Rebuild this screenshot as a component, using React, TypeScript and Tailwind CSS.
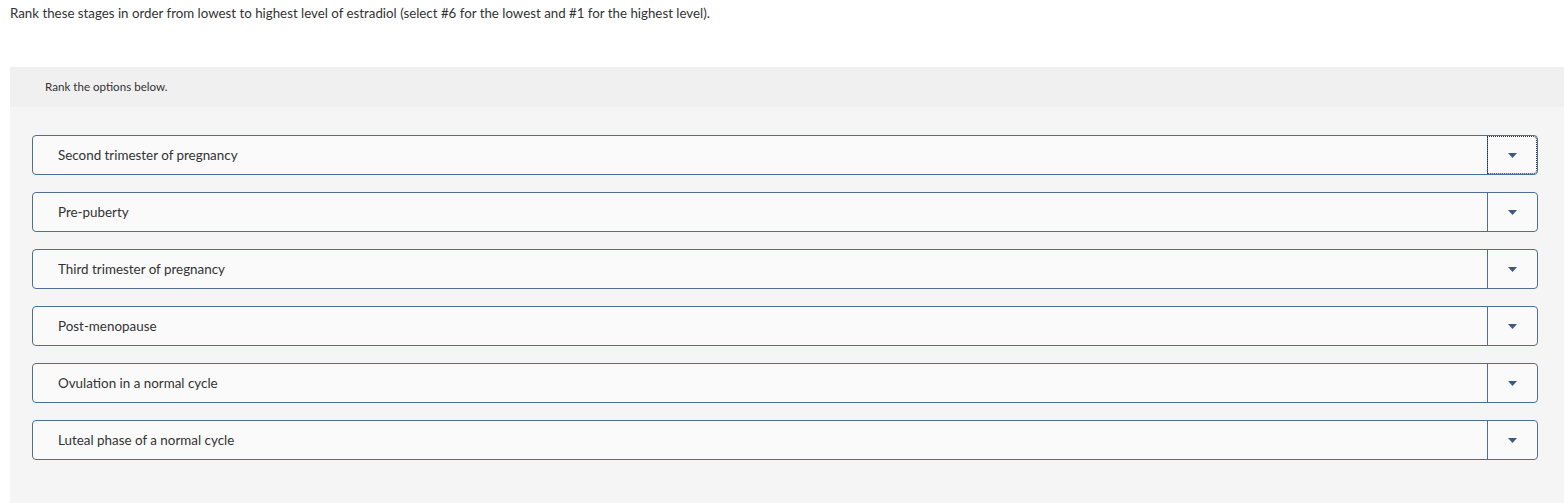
const options = [
  "Second trimester of pregnancy",
  "Pre-puberty",
  "Third trimester of pregnancy",
  "Post-menopause",
  "Ovulation in a normal cycle",
  "Luteal phase of a normal cycle",
];

const RankRow = ({ label, focused }: { label: string; focused?: boolean }) => {
  return (
    <div className="flex h-10 rounded-[4px] border border-[#4e6f91] bg-[#fafafa]">
      <div className="flex flex-1 items-center pl-[25px] text-[13.4px] text-[#333]">
        {label}
      </div>
      <button
        className={
          "flex w-[50px] items-center justify-center border-l border-[#4e6f91] rounded-r-[4px] " +
          (focused ? "outline outline-1 outline-dotted outline-[#333] -outline-offset-1" : "")
        }
      >
        <svg width="9" height="5" viewBox="0 0 9 5">
          <path d="M0 0h9L4.5 5z" fill="#3d5a80" />
        </svg>
      </button>
    </div>
  );
};

export default function App() {
  return (
    <div className="min-h-[503px] bg-white font-['Lato','Liberation_Sans',sans-serif]">
      <p className="px-[10px] pt-[3px] text-[13.3px] leading-[20px] text-[#333]">
        Rank these stages in order from lowest to highest level of estradiol (select #6 for the
        lowest and #1 for the highest level).
      </p>

      <div className="ml-[10px] mt-[44px] bg-[#f5f5f5]">
        <div className="flex h-10 items-center bg-[#f0f0f0] pl-[35px] text-[11.6px] text-[#333]">
          Rank the options below.
        </div>
        <div className="flex flex-col gap-[17px] pl-[22px] pr-[26px] pt-[28px] pb-[43px]">
          {options.map((o, i) => (
            <RankRow key={o} label={o} focused={i === 0} />
          ))}
        </div>
      </div>
    </div>
  );
}
